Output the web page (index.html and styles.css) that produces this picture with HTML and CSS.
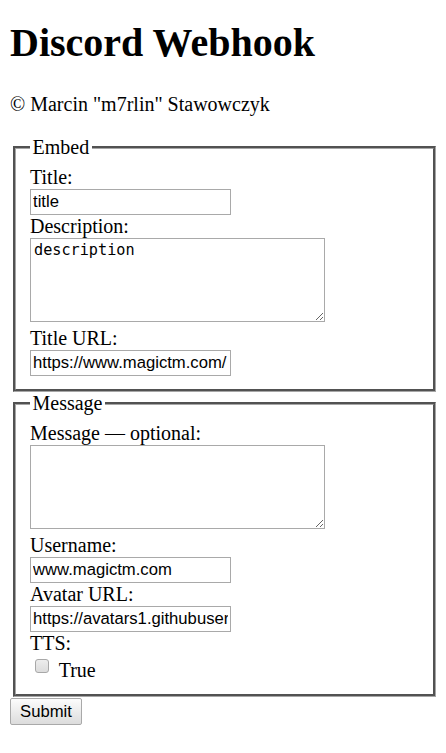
FILE: index.html
```
<!DOCTYPE html>
<html>
<head>
<meta charset="utf-8">
<title>Discord Webhook</title>
<link rel="stylesheet" href="styles.css">
</head>
<body>
<h1 class="title">Discord Webhook</h1>
<p class="credit">© Marcin "m7rlin" Stawowczyk</p>
<form class="form">
<fieldset class="group">
<legend class="legend">Embed</legend>
<label class="lbl">Title:</label><br>
<input class="field" type="text" value="title"><br>
<label class="lbl">Description:</label><br>
<textarea class="area">description</textarea><br>
<label class="lbl">Title URL:</label><br>
<input class="field" type="text" value="https://www.magictm.com/">
</fieldset>
<fieldset class="group">
<legend class="legend">Message</legend>
<label class="lbl">Message — optional:</label><br>
<textarea class="area"></textarea><br>
<label class="lbl">Username:</label><br>
<input class="field" type="text" value="www.magictm.com"><br>
<label class="lbl">Avatar URL:</label><br>
<input class="field" type="text" value="https://avatars1.githubusercontent.com/u/1234567"><br>
<label class="lbl">TTS:</label><br>
<input class="check" type="checkbox"> <span class="lbl">True</span>
</fieldset>
<button class="submit" type="button">Submit</button>
</form>
</body>
</html>
```
FILE: styles.css
```
html {
  background: #fff;
}
body {
  margin: 10px;
  font-family: "Liberation Serif", "Times New Roman", serif;
  font-size: 20px;
  line-height: 23px;
  color: #000;
}
.title {
  font-size: 40px;
  line-height: 46px;
  font-weight: bold;
  margin: 10px 0 27px;
}
.credit {
  margin: 0 0 20px;
}
.form {
  margin: 0;
}
.group {
  margin: 0 0 0 3px;
  padding: 7px 15px 12.5px 14px;
  border: 3px groove #a6a6a6;
  min-width: 0;
}
.legend {
  padding: 0 2.5px;
}
.lbl {
  font-size: 20px;
}
.field {
  box-sizing: border-box;
  width: 201px;
  height: 26px;
  margin: 0;
  padding: 1px 2px;
  border: 1px solid #a9a9a9;
  font-family: "Liberation Sans", Arial, sans-serif;
  font-size: 16.67px;
  color: #000;
  background: #fff;
  vertical-align: baseline;
}
.area {
  box-sizing: border-box;
  width: 295px;
  height: 84px;
  margin: 0;
  padding: 2px 3px;
  border: 1px solid #a9a9a9;
  font-family: "DejaVu Sans Mono", monospace;
  font-size: 15.2px;
  line-height: 18px;
  color: #000;
  background: #fff;
}
.check {
  appearance: none;
  -webkit-appearance: none;
  box-sizing: border-box;
  width: 14px;
  height: 14px;
  margin: 4px 5px 5px 5px;
  border: 1px solid #a8a8a8;
  border-radius: 3px;
  background: linear-gradient(#ededed, #dcdcdc);
  vertical-align: -1px;
}
.submit {
  box-sizing: border-box;
  width: 72px;
  height: 27px;
  margin: 1px 0 0;
  padding: 0 6px;
  border: 1px solid #a9a9a9;
  border-radius: 2px;
  background: linear-gradient(#fcfcfc, #dcdcdc);
  font-family: "Liberation Sans", Arial, sans-serif;
  font-size: 16.67px;
  color: #000;
}
```
